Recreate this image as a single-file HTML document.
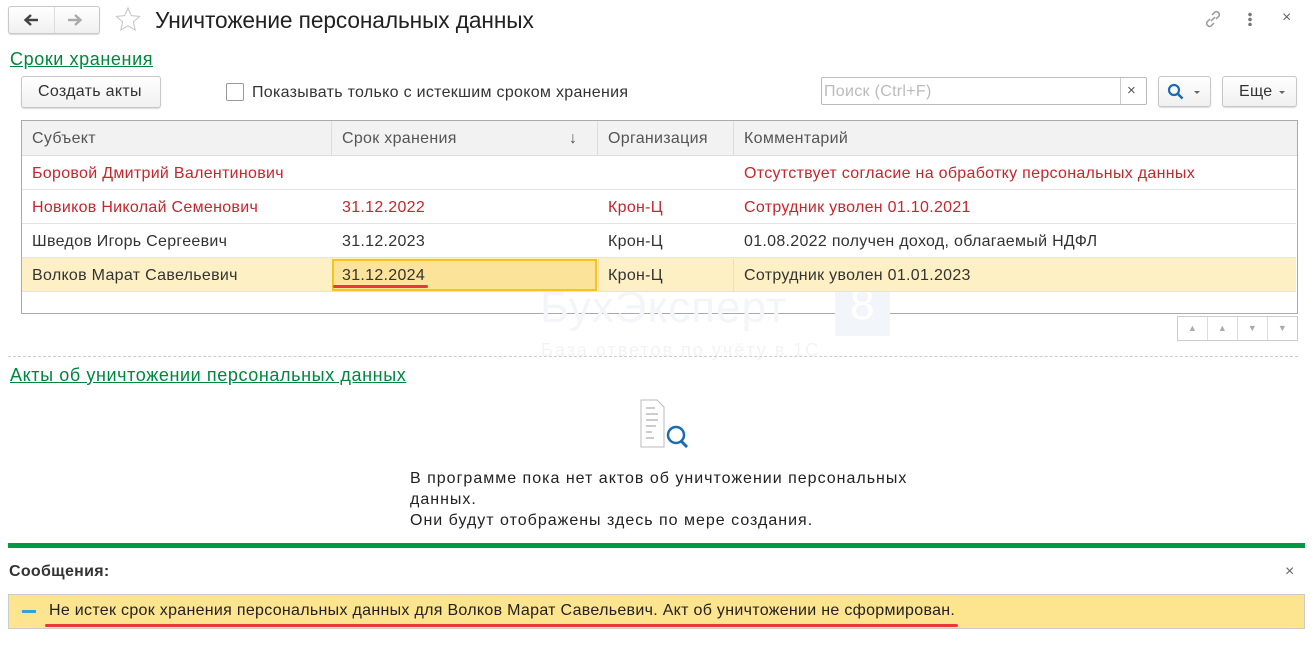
<!DOCTYPE html>
<html><head><meta charset="utf-8"><style>
*{box-sizing:border-box;margin:0;padding:0}
body{width:1315px;height:645px;background:#fff;font-family:"Liberation Sans",Arial,sans-serif;font-size:16px;letter-spacing:0.3px;color:#333;position:relative;overflow:hidden}
.a{position:absolute}
.btn{position:absolute;border:1px solid #c8c8c8;border-radius:3px;background:linear-gradient(#fff,#f0f0f0);box-shadow:0 1px 1px rgba(0,0,0,.15)}
.link{color:#00863d;text-decoration:underline;font-size:18px;letter-spacing:0.6px}
.row{position:absolute;left:22px;width:1274px;height:34px;border-bottom:1px solid #e4e4e4}
.row span{position:absolute;top:9px;white-space:nowrap}
.red{color:#c8252c}
</style></head><body>
<div class="btn" style="left:8px;top:6px;width:92px;height:28px"></div>
<div class="a" style="left:54px;top:7px;width:1px;height:26px;background:#ddd"></div>
<svg class="a" style="left:22px;top:12px" width="18" height="16" viewBox="0 0 18 16"><path d="M16 8H4M9 3L3.5 8 9 13" fill="none" stroke="#444" stroke-width="2.4"/></svg>
<svg class="a" style="left:66px;top:12px" width="18" height="16" viewBox="0 0 18 16"><path d="M2 8h12M9 3l5.5 5L9 13" fill="none" stroke="#aaa" stroke-width="2.4"/></svg>
<svg class="a" style="left:114px;top:6px" width="28" height="28" viewBox="0 0 28 28"><path d="M14 2l3.4 7.6 8.2.8-6.2 5.5 1.8 8.1L14 19.8 6.8 24l1.8-8.1L2.4 10.4l8.2-.8z" fill="none" stroke="#c4c4c4" stroke-width="1"/></svg>
<div class="a" style="left:155px;top:7px;font-size:22.7px;letter-spacing:-0.1px;color:#222">Уничтожение персональных данных</div>
<svg class="a" style="left:1203px;top:9px" width="20" height="20" viewBox="0 0 20 20"><g fill="none" stroke="#999" stroke-width="1.5"><path d="M9 6l3-3a3 3 0 014 4l-3 3"/><path d="M11 14l-3 3a3 3 0 01-4-4l3-3"/><path d="M8 12l4-4"/></g></svg>
<div class="a" style="left:1248px;top:12px;width:4px;height:14px;background:radial-gradient(circle,#777 1.6px,transparent 2px) 0 0/4px 5px"></div>
<div class="a" style="left:1282px;top:9px;font-size:16px;color:#666">×</div>

<div class="a link" style="left:10px;top:49px">Сроки хранения</div>
<div class="btn" style="left:21px;top:76px;width:140px;height:32px"></div>
<div class="a" style="left:38px;top:83px">Создать акты</div>
<div class="a" style="left:226px;top:83px;width:18px;height:18px;border:1px solid #999;border-radius:2px"></div>
<div class="a" style="left:252px;top:84px">Показывать только с истекшим сроком хранения</div>
<div class="a" style="left:821px;top:77px;width:326px;height:28px;border:1px solid #bbb;border-radius:2px"></div>
<div class="a" style="left:1120px;top:78px;width:1px;height:26px;background:#ccc"></div>
<div class="a" style="left:824px;top:83px;color:#bbb">Поиск (Ctrl+F)</div>
<div class="a" style="left:1127px;top:82px;color:#555;font-size:15px">×</div>
<div class="btn" style="left:1158px;top:76px;width:53px;height:31px"></div>
<svg class="a" style="left:1167px;top:83px" width="18" height="18" viewBox="0 0 18 18"><circle cx="7" cy="7" r="5" fill="none" stroke="#1c6bb5" stroke-width="2.2"/><path d="M10.5 10.5l5 5" stroke="#1c6bb5" stroke-width="2.6"/></svg>
<div class="a" style="left:1194px;top:91px;border:3px solid transparent;border-top:3px solid #666"></div>
<div class="btn" style="left:1222px;top:76px;width:75px;height:31px"></div>
<div class="a" style="left:1239px;top:83px;color:#333">Еще</div>
<div class="a" style="left:1279px;top:91px;border:3px solid transparent;border-top:3px solid #666"></div>

<div class="a" style="left:21px;top:120px;width:1277px;height:194px;border:1px solid #aaa"></div>
<div class="a" style="left:22px;top:121px;width:1275px;height:35px;background:#f2f2f2;border-bottom:1px solid #ddd"></div>
<div class="a" style="left:331px;top:121px;width:1px;height:35px;background:#ddd"></div>
<div class="a" style="left:597px;top:121px;width:1px;height:35px;background:#ddd"></div>
<div class="a" style="left:733px;top:121px;width:1px;height:35px;background:#ddd"></div>
<div class="a" style="left:32px;top:130px;color:#555">Субъект</div>
<div class="a" style="left:342px;top:130px;color:#555">Срок хранения</div>
<div class="a" style="left:569px;top:130px;color:#555">↓</div>
<div class="a" style="left:608px;top:130px;color:#555">Организация</div>
<div class="a" style="left:744px;top:130px;color:#555">Комментарий</div>

<div class="a" style="left:540px;top:283px;font-size:44px;color:#f3f5f8;letter-spacing:1px">БухЭксперт</div>
<div class="a" style="left:835px;top:280px;width:55px;height:56px;background:#f2f6fb;color:#fff;font-size:44px;text-align:center">8</div>
<div class="a" style="left:541px;top:340px;font-size:18px;color:#f3f3f3;letter-spacing:2px">База ответов по учёту в 1С</div>

<div class="row red" style="top:156px"><span style="left:10px">Боровой Дмитрий Валентинович</span><span style="left:722px">Отсутствует согласие на обработку персональных данных</span></div>
<div class="row red" style="top:190px"><span style="left:10px">Новиков Николай Семенович</span><span style="left:320px">31.12.2022</span><span style="left:586px">Крон-Ц</span><span style="left:722px">Сотрудник уволен 01.10.2021</span></div>
<div class="row" style="top:224px"><span style="left:10px">Шведов Игорь Сергеевич</span><span style="left:320px">31.12.2023</span><span style="left:586px">Крон-Ц</span><span style="left:722px">01.08.2022 получен доход, облагаемый НДФЛ</span></div>
<div class="row" style="top:258px;background:#fdf0c5"><span style="left:10px">Волков Марат Савельевич</span><span style="left:586px">Крон-Ц</span><span style="left:722px">Сотрудник уволен 01.01.2023</span></div>
<div class="a" style="left:332px;top:259px;width:265px;height:32px;background:#fbe39a;border:2px solid #f6c51d"></div>
<div class="a" style="left:342px;top:267px;color:#333">31.12.2024</div>
<div class="a" style="left:333px;top:285px;width:95px;height:3px;background:#e8383d;border-radius:2px"></div>
<div class="a" style="left:598px;top:259px;width:1px;height:33px;background:#f0e0b0"></div>
<div class="a" style="left:733px;top:259px;width:1px;height:33px;background:#f0e0b0"></div>

<div class="a" style="left:1177px;top:316px;width:121px;height:25px;border:1px solid #ccc;display:flex">
<div style="flex:1;border-right:1px solid #ddd;color:#aaa;font-size:9px;text-align:center;line-height:23px">▲</div>
<div style="flex:1;border-right:1px solid #ddd;color:#aaa;font-size:9px;text-align:center;line-height:23px">▲</div>
<div style="flex:1;border-right:1px solid #ddd;color:#aaa;font-size:9px;text-align:center;line-height:23px">▼</div>
<div style="flex:1;color:#aaa;font-size:9px;text-align:center;line-height:23px">▼</div></div>
<div class="a" style="left:8px;top:356px;width:1290px;border-top:1px dashed #ccc"></div>
<div class="a link" style="left:10px;top:365px">Акты об уничтожении персональных данных</div>

<svg class="a" style="left:638px;top:398px" width="54" height="54" viewBox="0 0 54 54"><path d="M3 2h16l7 7v40H3z" fill="#fff" stroke="#bbb"/><path d="M8 10h9M8 16h12M8 22h12M8 28h10M8 34h6M8 40h8" stroke="#bbb" stroke-width="1.5"/><circle cx="38" cy="37" r="8" fill="#fff" stroke="#1c6bb5" stroke-width="2.5"/><path d="M43 43l6 6" stroke="#1c6bb5" stroke-width="3"/></svg>
<div class="a" style="left:410px;top:468px;line-height:21px;color:#222;font-size:16px;letter-spacing:1px">В программе пока нет актов об уничтожении персональных<br>данных.<br>Они будут отображены здесь по мере создания.</div>

<div class="a" style="left:8px;top:543px;width:1297px;height:5px;background:#009a44"></div>
<div class="a" style="left:9px;top:563px;font-weight:bold;color:#333">Сообщения:</div>
<div class="a" style="left:1285px;top:563px;font-size:16px;color:#666">×</div>
<div class="a" style="left:8px;top:594px;width:1297px;height:35px;background:#fde48f;border:1px solid #ccc"></div>
<div class="a" style="left:22px;top:610px;width:14px;height:3px;background:#36a0da"></div>
<div class="a" style="left:49px;top:602px;font-size:16px;color:#222">Не истек срок хранения персональных данных для Волков Марат Савельевич. Акт об уничтожении не сформирован.</div>
<div class="a" style="left:45px;top:624px;width:913px;height:3px;background:#e8383d;border-radius:2px"></div>
</body></html>
